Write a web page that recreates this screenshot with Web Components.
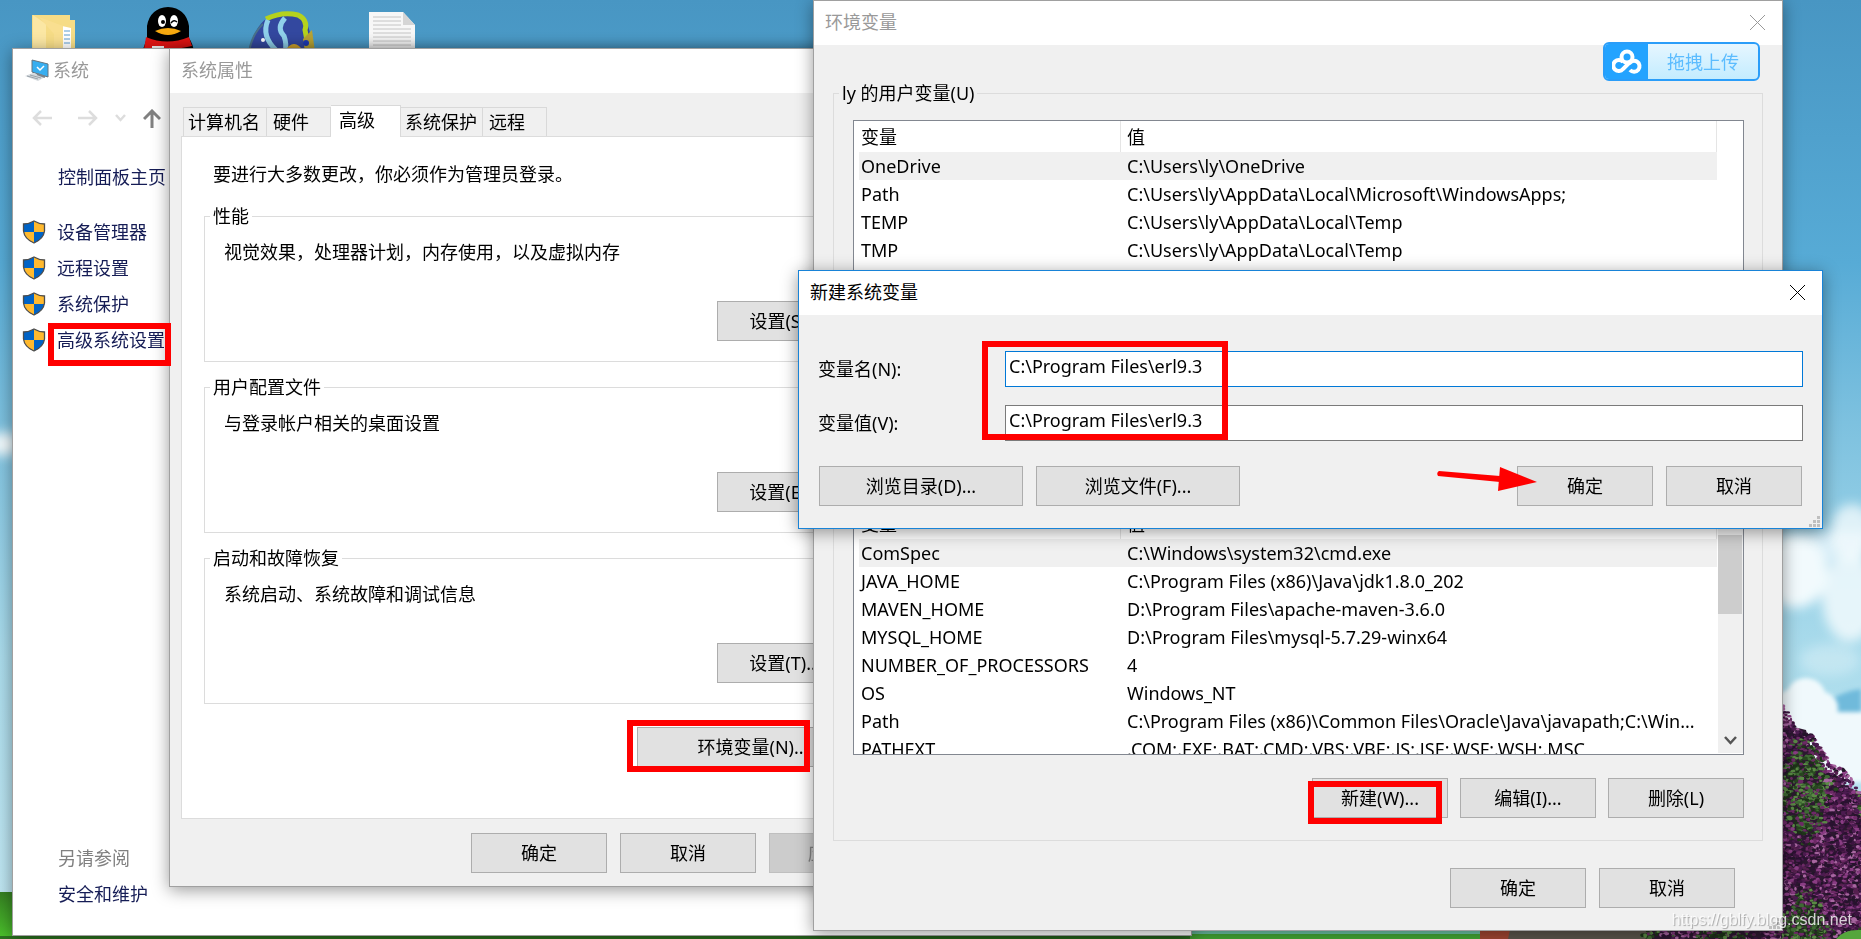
<!DOCTYPE html>
<html lang="zh-CN">
<head>
<meta charset="utf-8">
<title>环境变量</title>
<style>
  html, body { height: 100%; }
  body {
    margin: 0;
    overflow: hidden;
    font: 18px/24px "Noto Sans", "Noto Sans CJK SC", sans-serif;
    color: #000;
  }
</style>
</head>
<body>
<desk-top></desk-top>

<script>
/* ---------- helpers ---------- */
const define = (name, html, setup) => {
  const tpl = document.createElement('template');
  tpl.innerHTML = html;
  customElements.define(name, class extends HTMLElement {
    constructor() {
      super();
      this.attachShadow({ mode: 'open' }).append(tpl.content.cloneNode(true));
    }
    connectedCallback() {
      if (setup && !this.ready) { this.ready = true; setup(this, this.shadowRoot); }
    }
  });
};

/* ---------- wallpaper ---------- */
define('wall-paper', `
<style>
  :host { display: block; position: absolute; inset: 0; }
  svg { display: block; width: 100%; height: 100%; }
</style>
<svg viewBox="0 0 1861 939" preserveAspectRatio="xMinYMin slice" aria-hidden="true">
  <defs>
    <linearGradient id="sky" x1="0" y1="0" x2="0" y2="1">
      <stop offset="0" stop-color="#4896c3"/><stop offset=".28" stop-color="#57abd6"/>
      <stop offset=".45" stop-color="#7dc1df"/><stop offset=".7" stop-color="#abdcec"/>
      <stop offset="1" stop-color="#c3e8f3"/>
    </linearGradient>
    <linearGradient id="grass" x1="0" y1="0" x2="0" y2="1">
      <stop offset="0" stop-color="#357f22"/><stop offset="1" stop-color="#4cc42c"/>
    </linearGradient>
    <filter id="soft" x="-30%" y="-30%" width="160%" height="160%"><feGaussianBlur stdDeviation="6"/></filter>
    <filter id="edge" x="-10%" y="-10%" width="120%" height="120%"><feGaussianBlur stdDeviation="2"/></filter>
  </defs>
  <rect width="1861" height="939" fill="url(#sky)"/>
  <g fill="#f2fafd" filter="url(#soft)">
    <ellipse cx="4" cy="444" rx="16" ry="12"/>
    <rect x="1776" y="532" width="90" height="30" opacity=".7"/>
    <ellipse cx="1796" cy="572" rx="32" ry="36"/>
    <ellipse cx="1852" cy="532" rx="22" ry="28" opacity=".8"/>
    <ellipse cx="1850" cy="598" rx="28" ry="44" opacity=".85"/>
    <ellipse cx="1830" cy="660" rx="30" ry="16" opacity=".35"/>
  </g>
  <path d="M1822 705q20-14 39-16v28q-22 8-39 0z" fill="#6fbadb" filter="url(#edge)"/>
  <g fill="#f0f9fc" filter="url(#edge)">
    <circle cx="1806" cy="698" r="20"/><circle cx="1822" cy="708" r="16"/><circle cx="1790" cy="706" r="16"/>
    <circle cx="1842" cy="740" r="24"/><circle cx="1858" cy="748" r="30"/><rect x="1782" y="712" width="90" height="70"/>
  </g>
  <rect y="892" width="1861" height="47" fill="url(#grass)"/>
  <path d="M0 936h1190v3H0z" fill="#2c7420"/>
  <path d="M1190 930h290v5h-290z" fill="#6fc6a8"/>
  <path d="M1190 934h290v5h-290z" fill="#45a934"/>
  <path d="M1480 930h36l-4 9h-32z" fill="#a34632"/>
  <path d="M1510 930h150v9h-152z" fill="#5c564c"/>
  <path d="M1782 712l8 14 16 4 6 22 10 18 16 6 8 10 15 8v145h-209v-9h130z" fill="#2c1830"/>
  <g id="leaves"></g>
  <path d="M1836 939q8-10 25-9v9z" fill="#55a63c"/>
</svg>`, (host, root) => {
  /* foliage dabs from a small deterministic generator */
  let s = 7;
  const rnd = () => (s = (s * 16807) % 2147483647) / 2147483647;
  const purple = ['#6d2a66', '#8a3d84', '#3c1440', '#4c1c50', '#24152a', '#a766a0', '#55204f', '#2a1230'];
  const green = ['#3f6b34', '#27461f', '#5a8a45', '#1d3318', '#6d2a66'];
  const dab = (x, y) => {
    const leafy = Math.sin(x / 13 + 1) + Math.sin(y / 24) + rnd() > 1.1;
    const tones = leafy ? green : purple;
    return '<ellipse cx="' + x.toFixed(1) + '" cy="' + y.toFixed(1) + '" rx="' + (1 + rnd() * 2).toFixed(1) +
      '" ry="' + (1 + rnd()).toFixed(1) + '" fill="' + tones[Math.floor(rnd() * tones.length)] + '"/>';
  };
  let out = '';
  for (let i = 0; i < 3600; i++) {
    const x = 1774 + rnd() * 88;
    const top = 708 + Math.max(0, x - 1782) * 1.05 + Math.sin(x / 5) * 4;
    out += dab(x, top + rnd() * (939 - top));
  }
  for (let i = 0; i < 160; i++) out += dab(1640 + rnd() * 140, 930 + rnd() * 9);
  root.getElementById('leaves').innerHTML = out;
});

/* ---------- desktop shortcuts ---------- */
define('desk-shortcuts', `
<style>
  :host { display: block; position: absolute; left: 32px; top: 6px; }
  svg { display: block; }
</style>
<svg width="390" height="50" viewBox="32 6 390 50" aria-hidden="true">
  <path d="M32 15h38v5h5v36H32z" fill="#f6dc86"/>
  <path d="M62 26l9 2v28h-9z" fill="#fff"/><path d="M64 31h6M64 35h6M64 39h6M64 43h6" stroke="#5a9bd0"/>
  <path d="M33 15l13 9v32H33z" fill="#fbe7a4"/><path d="M39 17l24 9v30H54V34z" fill="#f9df90"/>
  <path d="M142 52q3-8 5-14V26q3-18 21-19 18 1 21 19v12q4 6 5 14z" fill="#000"/>
  <path d="M146 37q21 9 43 0l3 9q-20 5-48 3z" fill="#e11312"/>
  <path d="M152 46h12v8h-12z" fill="#f4f4f4"/>
  <ellipse cx="162" cy="21" rx="4" ry="6" fill="#fff"/><ellipse cx="174" cy="21" rx="4" ry="6" fill="#fff"/>
  <circle cx="163" cy="22" r="2" fill="#000"/><path d="M171 23q3-4 6-1" stroke="#000" stroke-width="1.500" fill="none"/>
  <path d="M155 31q13-6 26 0-13 8-26 0z" fill="#f6a90f"/>
  <path d="M249 52q6-32 28-39 27-3 32 16l6 23z" fill="#33489f"/>
  <path d="M266 19q16-8 32-4 10 5 7 15l3 16" fill="none" stroke="#b5d21d" stroke-width="5"/>
  <path d="M268 20q-7 16 8 30M285 18q-9 10-1 18 3 8 1 16" fill="none" stroke="#8fd0ea" stroke-width="5"/>
  <path d="M249 52q3-18 14-28" fill="none" stroke="#49718a" stroke-width="2"/>
  <path d="M284 52q10-16 20 0z" fill="#d5a62b"/><path d="M303 39l9-9 3 22h-10z" fill="#b8a334"/>
  <circle cx="306" cy="43" r="3" fill="#1b39b5"/><circle cx="263" cy="40" r="2" fill="#fff"/>
  <path d="M369 12h34l12 13v31h-46z" fill="#f7f7f7"/><path d="M403 12l12 13h-12z" fill="#d5d5d5"/>
  <path d="M373 17h28M373 21h28M373 25h28M373 29h38M373 33h38M373 37h38M373 41h38M373 45h38" stroke="#c4c4c4"/>
</svg>`);

/* ---------- window frame: title bar + body ---------- */
define('win-frame', `
<style>
  :host { display: flex; flex-direction: column; box-sizing: border-box; background: #f0f0f0;
    border: 1px solid var(--edge, #a0a0a0); box-shadow: 0 3px 16px rgba(0,0,0,.4); }
  header { display: flex; align-items: center; height: 44px; box-sizing: border-box; flex: none; background: #fff;
    padding: 0 16px 2px 11px; color: var(--caption, #999); }
  h1 { font: inherit; margin: 0; flex: 1; }
  button { border: 0; background: none; padding: 0; width: 17px; height: 17px; color: inherit; }
  svg { display: block; }
  :host(:not([closable])) button { display: none; }
  .body { flex: 1; display: flex; flex-direction: column; min-height: 0; }
</style>
<header><slot name="icon"></slot><h1></h1>
  <button type="button" aria-label="关闭"><svg width="17" height="17" viewBox="0 0 17 17"><path d="M1 1l15 15M16 1L1 16" stroke="currentColor" fill="none"/></svg></button>
</header>
<div class="body"><slot></slot></div>`, (host, root) => {
  root.querySelector('h1').textContent = host.getAttribute('caption');
});

/* ---------- push button ---------- */
define('push-button', `
<style>
  :host { display: block; width: 136px; flex: none; }
  button { display: block; box-sizing: border-box; width: 100%; height: 40px; padding: 0; font: inherit; color: #000;
    background: #e1e1e1; border: 1px solid #adadad; white-space: nowrap; }
  button:disabled { background: #ccc; border-color: #bfbfbf; color: #838383; }
</style>
<button type="button"><slot></slot></button>`, (host, root) => {
  root.querySelector('button').disabled = host.hasAttribute('disabled');
});

/* ---------- group box ---------- */
define('group-box', `
<style>
  :host { display: block; }
  fieldset { box-sizing: border-box; width: 100%; min-height: 100%; margin: 0; border: 1px solid #dcdcdc; min-width: 0;
    padding: var(--pad, 0); }
  legend { margin-left: -14px; padding: 0 3px; }
</style>
<fieldset><legend></legend><slot></slot></fieldset>`, (host, root) => {
  const legend = root.querySelector('legend');
  if (host.hasAttribute('label')) legend.textContent = host.getAttribute('label');
  else legend.remove();
});

/* ---------- variable list ---------- */
define('variable-list', `
<style>
  :host { display: flex; box-sizing: border-box; height: 248px; background: #fff; border: 1px solid #828790; overflow: hidden; }
  table { flex: 1; min-width: 0; margin-left: 5px; table-layout: fixed; border-collapse: separate; border-spacing: 0; align-self: flex-start; }
  col.name { width: 262px; }
  th, td { box-sizing: border-box; height: 28px; padding: 0 0 0 2px; text-align: left; font-weight: 400; white-space: nowrap; overflow: hidden; }
  th { height: 31px; border-right: 1px solid #e5e5e5; }
  th + th, td + td { padding-left: 6px; }
  tbody tr:first-child td { background: #f0f0f0; }
  .bar { width: 25px; flex: none; display: flex; flex-direction: column; background: #f0f0f0; margin: 1px 0 1px 1px; }
  .thumb { margin: 26px 1px 0 0; height: 79px; background: #cdcdcd; }
  .bar svg { display: block; margin: auto 0 7px 6px; }
  :host(:not([scroll])) .bar { visibility: hidden; }
</style>
<table>
  <colgroup><col class="name"><col></colgroup>
  <thead><tr><th scope="col">变量</th><th scope="col">值</th></tr></thead>
  <tbody></tbody>
</table>
<div class="bar"><div class="thumb"></div>
  <svg width="13" height="11" viewBox="0 0 13 11" aria-hidden="true"><path d="M1 2l5.500 6L12 2" fill="none" stroke="#555" stroke-width="2.500"/></svg></div>`,
(host, root) => {
  const body = root.querySelector('tbody');
  for (const [name, value] of lists[host.getAttribute('source')]) {
    const row = body.insertRow();
    row.insertCell().textContent = name;
    row.insertCell().textContent = value;
  }
});
const lists = {
  user: [
    ['OneDrive', 'C:\\Users\\ly\\OneDrive'],
    ['Path', 'C:\\Users\\ly\\AppData\\Local\\Microsoft\\WindowsApps;'],
    ['TEMP', 'C:\\Users\\ly\\AppData\\Local\\Temp'],
    ['TMP', 'C:\\Users\\ly\\AppData\\Local\\Temp']
  ],
  system: [
    ['ComSpec', 'C:\\Windows\\system32\\cmd.exe'],
    ['JAVA_HOME', 'C:\\Program Files (x86)\\Java\\jdk1.8.0_202'],
    ['MAVEN_HOME', 'D:\\Program Files\\apache-maven-3.6.0'],
    ['MYSQL_HOME', 'D:\\Program Files\\mysql-5.7.29-winx64'],
    ['NUMBER_OF_PROCESSORS', '4'],
    ['OS', 'Windows_NT'],
    ['Path', 'C:\\Program Files (x86)\\Common Files\\Oracle\\Java\\javapath;C:\\Win...'],
    ['PATHEXT', '.COM;.EXE;.BAT;.CMD;.VBS;.VBE;.JS;.JSE;.WSF;.WSH;.MSC']
  ]
};

/* ---------- labelled text field ---------- */
define('text-field', `
<style>
  :host { display: flex; align-items: center; }
  label { width: 187px; flex: none; }
  input { flex: 1; min-width: 0; box-sizing: border-box; height: 36px; margin: 0; padding: 0 3px 6px; border: 1px solid #7a7a7a;
    background: #fff; font: inherit; color: #000; border-radius: 0; outline: 0; }
  :host([active]) input { border-color: #0078d7; }
</style>
<label for="box"></label><input id="box" type="text">`, (host, root) => {
  root.querySelector('label').textContent = host.getAttribute('label');
  root.querySelector('input').value = host.getAttribute('value');
});

/* ---------- resize grip ---------- */
define('size-grip', `
<style>:host { display: block; position: absolute; right: 3px; bottom: 2px; } svg { display: block; }</style>
<svg width="11" height="11" viewBox="0 0 11 11" aria-hidden="true"><path d="M8 0h3v3H8zM4 4h3v3H4zM8 4h3v3H8zM0 8h3v3H0zM4 8h3v3H4zM8 8h3v3H8z" fill="#bfbfbf"/></svg>`);

/* ---------- red annotation frame ---------- */
define('mark-box', `
<style>:host { display: block; position: absolute; box-sizing: border-box; border: 6px solid #f00; pointer-events: none; }</style>`);

/* ---------- "System" control panel window ---------- */
define('shield-link', `
<style>
  :host { display: flex; align-items: center; height: 36px; }
  svg { display: block; width: 24px; height: 24px; margin: 0 11px 0 9px; }
  a { color: #151c55; text-decoration: none; white-space: nowrap; }
</style>
<svg viewBox="0 0 24 24" aria-hidden="true">
  <path d="M12 1Q7 4 1.500 4v7q1 8 10.500 12z" fill="#0063c6"/><path d="M12 1q5 3 10.500 3v7q-1 8-10.500 12z" fill="#ffb92e"/>
  <path d="M1.500 12H12v11Q3 19 1.500 12z" fill="#ffb92e"/><path d="M22.500 12H12v11q9-4 10.500-11z" fill="#0063c6"/>
  <path d="M12 1Q7 4 1.500 4v7q1 8 10.500 12 9.500-4 10.500-12V4Q17 4 12 1z" fill="none" stroke="#4d4d4d" stroke-width="1.300"/>
</svg>
<a href="#"><slot></slot></a>`);

define('system-window', `
<style>
  :host { display: block; position: absolute; left: 12px; top: 48px; width: 1180px; height: 888px; }
  win-frame { height: 100%; background: #fff; }
  .app { display: block; margin: 0 4px 0 1px; }
  .nav { display: flex; align-items: center; gap: 26px; height: 30px; padding: 10px 0 0 19px; }
  .nav svg { display: block; }
  .nav .more { margin: 0 -9px; }
  a { color: #151c55; text-decoration: none; white-space: nowrap; }
  .side { display: flex; flex-direction: column; flex: 1; padding: 32px 0 29px; }
  .side > a, .see { margin-left: 45px; }
  .home { margin-bottom: 25px; }
  .see { margin-top: auto; margin-bottom: 12px; color: #808080; }
</style>
<win-frame caption="系统">
  <svg class="app" slot="icon" width="24" height="22" viewBox="0 0 24 22" aria-hidden="true">
    <path d="M7 1l16 4v13L7 13z" fill="#37aef0" stroke="#667580"/><path d="M12 8l3 3 4-4" fill="none" stroke="#fff" stroke-width="1.500"/>
    <path d="M0 17l8-3 12 4-7 4z" fill="#d5dade"/><path d="M2 17l11 3M5 16l11 3" stroke="#9aa3aa"/><path d="M12 15l8 3" stroke="#78838b" stroke-width="2"/>
  </svg>
  <div class="nav">
    <svg width="20" height="18" viewBox="0 0 20 18" aria-hidden="true"><path d="M20 9H2M9 2L2 9l7 7" fill="none" stroke="#ddd" stroke-width="2.500"/></svg>
    <svg width="20" height="18" viewBox="0 0 20 18" aria-hidden="true"><path d="M0 9h18M11 2l7 7-7 7" fill="none" stroke="#ddd" stroke-width="2.500"/></svg>
    <svg class="more" width="11" height="8" viewBox="0 0 11 8" aria-hidden="true"><path d="M1 1l4.500 5L10 1" fill="none" stroke="#ddd" stroke-width="2.500"/></svg>
    <svg width="18" height="19" viewBox="0 0 18 19" aria-hidden="true"><path d="M9 19V2M1 10l8-8 8 8" fill="none" stroke="#808080" stroke-width="3"/></svg>
  </div>
  <nav class="side">
    <a class="home" href="#">控制面板主页</a>
    <shield-link>设备管理器</shield-link>
    <shield-link>远程设置</shield-link>
    <shield-link>系统保护</shield-link>
    <shield-link>高级系统设置</shield-link>
    <span class="see">另请参阅</span>
    <a href="#">安全和维护</a>
  </nav>
</win-frame>`);

/* ---------- "System Properties" ---------- */
define('properties-window', `
<style>
  :host { display: block; position: absolute; left: 169px; top: 48px; width: 748px; height: 839px; }
  win-frame { height: 100%; }
  .tabs { display: flex; align-items: flex-end; height: 31px; margin: 12px 0 0 13px; }
  .tabs button { box-sizing: border-box; height: 29px; padding: 0 0 0 4px; margin: 0; border: 1px solid #d9d9d9; border-width: 1px 1px 0 0;
    background: #f0f0f0; font: inherit; color: #000; text-align: left; width: 82px; white-space: nowrap; }
  .tabs button:first-child { border-left-width: 1px; width: 84px; }
  .tabs button.short { width: 64px; padding-left: 6px; }
  .tabs button[aria-selected=true] { width: 70px; height: 32px; margin-bottom: -1px; padding: 0 0 4px 8px; background: #fff; position: relative; }
  .panel { flex: 1; margin: 0 12px 0 11px; padding: 25px 22px 0; background: #fff; border: 1px solid #dcdcdc; }
  p { margin: 0; }
  group-box { --pad: 12px 27px 20px 19px; margin-bottom: 13px; }
  .lead { margin: 0 9px 18px; }
  group-box push-button { margin: 37px 0 0 auto; }
  .env { width: 232px; margin: 23px 12px 0 auto; }
  .foot { display: flex; justify-content: flex-end; gap: 13px; padding: 14px 11px 13px; }
</style>
<win-frame caption="系统属性">
  <div class="tabs" role="tablist">
    <button type="button" role="tab">计算机名</button><button type="button" role="tab" class="short">硬件</button><button type="button" role="tab" aria-selected="true">高级</button><button type="button" role="tab">系统保护</button><button type="button" role="tab" class="short">远程</button>
  </div>
  <div class="panel">
    <p class="lead">要进行大多数更改，你必须作为管理员登录。</p>
    <group-box label="性能"><p>视觉效果，处理器计划，内存使用，以及虚拟内存</p><push-button>设置(S)...</push-button></group-box>
    <group-box label="用户配置文件"><p>与登录帐户相关的桌面设置</p><push-button>设置(E)...</push-button></group-box>
    <group-box label="启动和故障恢复"><p>系统启动、系统故障和调试信息</p><push-button>设置(T)...</push-button></group-box>
    <push-button class="env">环境变量(N)...</push-button>
  </div>
  <div class="foot"><push-button>确定</push-button><push-button>取消</push-button><push-button disabled>应用(A)</push-button></div>
</win-frame>`);

/* ---------- "Environment Variables" ---------- */
define('environment-window', `
<style>
  :host { display: block; position: absolute; left: 813px; top: 0; width: 970px; height: 931px; }
  win-frame { height: 100%; }
  .user { --pad: 15px 18px 0 19px; height: 373px; margin: 36px 19px 26px; }
  .system { --pad: 26px 18px 22px 19px; margin: 0 19px; }
  .row { display: flex; justify-content: flex-end; gap: 12px; padding-top: 23px; }
  .foot { display: flex; justify-content: flex-end; gap: 13px; padding: 27px 47px 0 0; }
</style>
<win-frame caption="环境变量" closable>
  <group-box class="user" label="ly 的用户变量(U)"><variable-list source="user"></variable-list></group-box>
  <group-box class="system">
    <variable-list source="system" scroll></variable-list>
    <div class="row"><push-button>新建(W)...</push-button><push-button>编辑(I)...</push-button><push-button>删除(L)</push-button></div>
  </group-box>
  <div class="foot"><push-button>确定</push-button><push-button>取消</push-button></div>
  <size-grip></size-grip>
</win-frame>`);

/* ---------- net-disk drop badge ---------- */
define('upload-badge', `
<style>
  :host { display: block; position: absolute; left: 1603px; top: 42px; }
  button { display: flex; align-items: stretch; box-sizing: border-box; width: 157px; height: 39px; padding: 0; overflow: hidden;
    border: 2px solid #2a9df9; border-radius: 6px; background: linear-gradient(#e6f6ff, #c3ecff); font: inherit; color: #5bbcff; }
  i { display: flex; align-items: center; justify-content: center; width: 43px; background: #23a3ff; }
  span { flex: 1; align-self: center; }
</style>
<button type="button"><i><svg width="30" height="25" viewBox="0 0 30 25" fill="none" stroke="#fff" stroke-width="4" aria-hidden="true">
  <circle cx="15" cy="8" r="5.500"/><path d="M19 12l-8 8a5.500 5.500 0 1 1 0-7"/><path d="M17 15a5.500 5.500 0 1 1 1 6"/></svg></i><span>拖拽上传</span></button>`);

/* ---------- "New System Variable" dialog ---------- */
define('variable-dialog', `
<style>
  :host { display: block; position: absolute; left: 798px; top: 270px; width: 1025px; height: 259px; }
  win-frame { height: 100%; --edge: #1883d7; --caption: #000; }
  form { display: flex; flex-direction: column; gap: 18px; padding: 36px 19px 0; }
  .foot { display: flex; gap: 13px; padding: 7px 1px 0; }
  .wide { width: 204px; }
  .gap { flex: 1; }
</style>
<win-frame caption="新建系统变量" closable>
  <form>
    <text-field label="变量名(N):" value="C:\\Program Files\\erl9.3" active></text-field>
    <text-field label="变量值(V):" value="C:\\Program Files\\erl9.3"></text-field>
    <div class="foot">
      <push-button class="wide">浏览目录(D)...</push-button><push-button class="wide">浏览文件(F)...</push-button>
      <span class="gap"></span>
      <push-button>确定</push-button><push-button>取消</push-button>
    </div>
  </form>
  <size-grip></size-grip>
</win-frame>`);

/* ---------- arrow annotation ---------- */
define('mark-arrow', `
<style>:host { display: block; position: absolute; left: 1434px; top: 464px; pointer-events: none; } svg { display: block; }</style>
<svg width="106" height="30" viewBox="1434 464 106 30" aria-hidden="true">
  <path d="M1439 471q-3 2-1 5l62 6v-6z" fill="red"/><path d="M1500 467l37 15-39 9z" fill="red"/></svg>`);

/* ---------- whole desktop ---------- */
define('desk-top', `
<style>
  :host { display: block; position: relative; width: 100%; height: 100%; overflow: hidden; }
  .m1 { left: 48px; top: 323px; width: 123px; height: 43px; }
  .m2 { left: 627px; top: 720px; width: 183px; height: 52px; }
  .m3 { left: 982px; top: 341px; width: 246px; height: 99px; }
  .m4 { left: 1308px; top: 781px; width: 134px; height: 43px; }
  .water { position: absolute; right: 9px; bottom: 8px; font: 16px/22px "Liberation Sans", Arial, sans-serif;
    color: rgba(255,255,255,.8); text-shadow: 1px 1px 1px rgba(0,0,0,.3); }
</style>
<wall-paper></wall-paper>
<desk-shortcuts></desk-shortcuts>
<system-window></system-window>
<properties-window></properties-window>
<environment-window></environment-window>
<upload-badge></upload-badge>
<variable-dialog></variable-dialog>
<mark-box class="m1"></mark-box>
<mark-box class="m2"></mark-box>
<mark-box class="m3"></mark-box>
<mark-box class="m4"></mark-box>
<mark-arrow></mark-arrow>
<span class="water">https://gblfy.blog.csdn.net</span>`);
</script>
</body>
</html>
